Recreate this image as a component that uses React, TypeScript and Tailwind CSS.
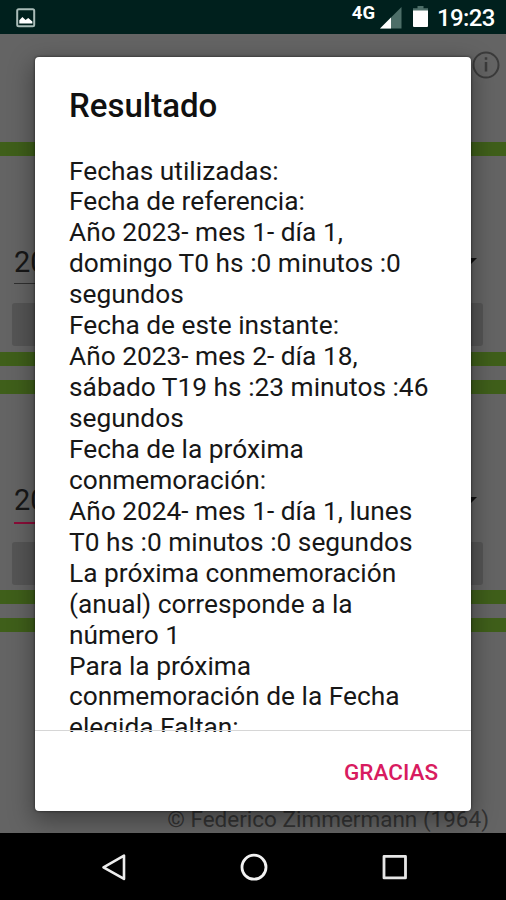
const lines = [
  "Fechas utilizadas:",
  "Fecha de referencia:",
  "Año 2023- mes 1- día 1,",
  "domingo T0 hs :0 minutos :0",
  "segundos",
  "Fecha de este instante:",
  "Año 2023- mes 2- día 18,",
  "sábado T19 hs :23 minutos :46",
  "segundos",
  "Fecha de la próxima",
  "conmemoración:",
  "Año 2024- mes 1- día 1, lunes",
  "T0 hs :0 minutos :0 segundos",
  "La próxima conmemoración",
  "(anual) corresponde a la",
  "número 1",
  "Para la próxima",
  "conmemoración de la Fecha",
  "elegida Faltan:",
];

function StatusBar() {
  return (
    <header className="flex h-[34px] shrink-0 items-start bg-[#00201d] text-white">
      <svg className="ml-[16px] mt-[8px]" width="20" height="20" viewBox="0 0 20 20">
        <rect x="1.2" y="1.2" width="17" height="17" rx="1.5" fill="none" stroke="#a9bcb8" strokeWidth="2" />
        <path d="M3.3 15.5v-3.2l3.1-3.2 3.2 3 2.6-2 4.2 3.5v1.9z" fill="#fff" />
      </svg>
      <span className="ml-auto mr-[5px] mt-[4px] text-[18.5px] font-bold leading-[18px]">4G</span>
      <svg className="mt-[7px]" width="22" height="22" viewBox="0 0 22 22">
        <path d="M0 21.5 21.5 0v21.5z" fill="#4d6e68" />
        <path d="M0 21.5 11 10.5v11z" fill="#fff" />
      </svg>
      <svg className="ml-[11px] mt-[6px]" width="15" height="22" viewBox="0 0 15 22">
        <path d="M4.5 0h6v2.3H15V5H0V2.3h4.5z" fill="#4d6e68" />
        <path d="M0 4.5h15V20a1 1 0 0 1-1 1H1a1 1 0 0 1-1-1z" fill="#fff" />
      </svg>
      <span className="ml-[9px] mr-[11px] mt-[4px] w-[58px] whitespace-nowrap text-[24px] font-medium leading-[28px] tracking-[-0.6px]">19:23</span>
    </header>
  );
}

function Field({ active = false }: { active?: boolean }) {
  return (
    <div className="flex flex-col px-[14px]">
      <div className="flex h-[39px] items-start justify-between">
        <span className={active ? "text-[29px] leading-[34px] text-[#171717]" : "text-[29px] leading-[37px] text-[#171717]"}>20</span>
        <svg className="mr-[15px] mt-[14px]" width="16" height="8" viewBox="0 0 16 8">
          <path d="M0 0h16L8 8z" fill="#111" />
        </svg>
      </div>
      <div className={active ? "h-[2px] w-[200px] bg-[#8a0d38]" : "h-[1px] w-[200px] bg-[#303030]"} />
    </div>
  );
}

function Background() {
  return (
    <main className="flex grow flex-col overflow-hidden bg-[#646464]">
      <div className="flex h-[108px] justify-end pr-[6px] pt-[17px]">
        <svg width="28" height="28" viewBox="0 0 28 28" fill="none" stroke="#3b3b3b" strokeWidth="2">
          <circle cx="14" cy="14" r="12.5" />
          <path d="M14 11v9.5M14 6.3v2.5" strokeWidth="2.5" />
        </svg>
      </div>
      <div className="h-[14px] shrink-0 bg-[#3f5f1a]" />
      <div className="flex h-[196px] shrink-0 flex-col pt-[88px]">
        <Field />
        <div className="ml-[12px] mr-[23px] mt-[19px] h-[43px] rounded-[3px] bg-[#555555]" />
      </div>
      <div className="h-[14px] shrink-0 bg-[#3f5f1a]" />
      <div className="h-[14px] shrink-0" />
      <div className="h-[14px] shrink-0 bg-[#3f5f1a]" />
      <div className="flex h-[196px] shrink-0 flex-col pt-[89px]">
        <Field active />
        <div className="ml-[12px] mr-[23px] mt-[18px] h-[43px] rounded-[3px] bg-[#555555]" />
      </div>
      <div className="h-[14px] shrink-0 bg-[#3f5f1a]" />
      <div className="h-[14px] shrink-0" />
      <div className="h-[14px] shrink-0 bg-[#3f5f1a]" />
      <div className="flex grow items-end justify-end pr-[17px]">
        <span className="whitespace-nowrap text-[22.5px] leading-[27px] text-[#333333]">© Federico Zimmermann (1964)</span>
      </div>
    </main>
  );
}

function ResultDialog() {
  return (
    <section className="absolute left-[35px] top-[57px] flex h-[754px] w-[436px] flex-col overflow-hidden rounded-[4px] bg-white shadow-[0_8px_24px_2px_rgba(0,0,0,0.36),0_0_3px_rgba(0,0,0,0.6)]">
      <h1 className="shrink-0 pl-[34px] pt-[29px] text-[33px] font-medium leading-[40px] text-[#101010]">Resultado</h1>
      <div className="mt-[29.5px] h-[576.5px] shrink-0 overflow-hidden pl-[34px] text-[26.3px] leading-[30.94px] text-[#171717]">
        {lines.map((line, i) => (
          <p key={i} className="whitespace-nowrap">{line}</p>
        ))}
      </div>
      <div className="-mt-[2px] h-px shrink-0 bg-[#d6d6d6]" />
      <div className="flex grow items-center justify-end pr-[33px] pt-[2px]">
        <button className="text-[22.5px] font-medium leading-[30px] text-[#d81b60]">GRACIAS</button>
      </div>
    </section>
  );
}

function NavBar() {
  return (
    <nav className="flex h-[67px] shrink-0 items-start bg-black pt-[20px]">
      <svg className="ml-[101px]" width="26" height="28" viewBox="0 0 26 28" fill="none" stroke="#ededed" strokeWidth="2.6" strokeLinejoin="round">
        <path d="M2.5 14.3 23 2.7v23.2z" />
      </svg>
      <svg className="ml-[113px]" width="28" height="28" viewBox="0 0 28 28" fill="none" stroke="#f2f2f2" strokeWidth="2.8">
        <circle cx="14" cy="14.2" r="12" />
      </svg>
      <svg className="ml-[114px]" width="26" height="28" viewBox="0 0 26 28" fill="none" stroke="#e7e7e7" strokeWidth="2.8" strokeLinejoin="round">
        <rect x="2" y="3.4" width="21.5" height="21.5" />
      </svg>
    </nav>
  );
}

export default function App() {
  return (
    <div className="relative flex h-[900px] w-[506px] flex-col overflow-hidden font-[Roboto,sans-serif]">
      <StatusBar />
      <Background />
      <NavBar />
      <ResultDialog />
    </div>
  );
}
